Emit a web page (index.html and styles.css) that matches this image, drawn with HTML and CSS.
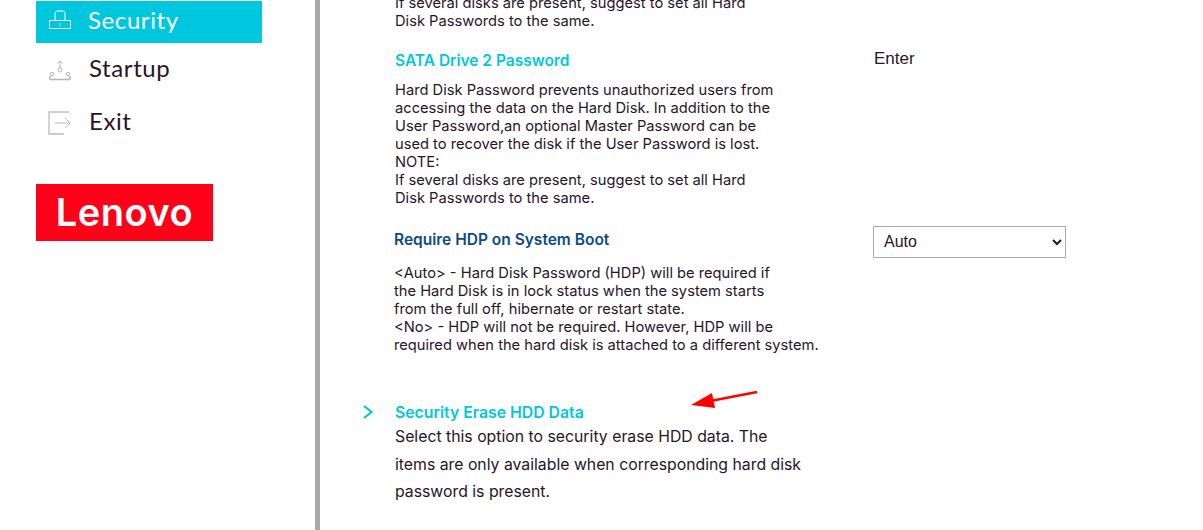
FILE: index.html
```html
<!DOCTYPE html>
<html lang="en">
<head>
  <meta charset="UTF-8" />
  <title>BIOS Setup - Security</title>
  <link rel="stylesheet" href="styles.css">
</head>
<body>
  <div class="page">
    <!-- Sidebar -->
    <aside class="sidebar">
      <ul class="nav">
        <li class="nav-item active">
          <svg class="nav-icon lock" width="24" height="22" viewBox="0 0 24 22" fill="none" stroke="#fff" stroke-width="1">
            <path d="M1.500 10.500h21v8h-21z"/>
            <path d="M7 10.500V3.500a2.500 2.500 0 0 1 2.500-2.500h5a2.500 2.500 0 0 1 2.500 2.500v7"/>
            <path d="M12 13v3.500" stroke-opacity=".5"/>
          </svg>
          <span>Security</span>
        </li>
        <li class="nav-item startup">
          <svg class="nav-icon" width="24" height="22" viewBox="0 0 24 22" fill="none" stroke="#b5b5b5" stroke-width="1">
            <path d="M12 9V2M9.500 4.500 12 2l2.500 2.500"/>
            <circle cx="12" cy="11" r="2"/>
            <circle cx="4" cy="15" r="1.700"/>
            <circle cx="20" cy="15" r="1.700"/>
            <path d="M2 20.500h20M2 17v3.500M22 17v3.500" stroke-width="1.500"/>
          </svg>
          <span>Startup</span>
        </li>
        <li class="nav-item exit">
          <svg class="nav-icon" width="24" height="24" viewBox="0 0 24 24" fill="none" stroke="#bdbdbd" stroke-width="1.300">
            <path d="M21 1H1v22h15"/>
            <path d="M7 12h15M17 7l5 5-5 5" stroke-width="1"/>
          </svg>
          <span>Exit</span>
        </li>
      </ul>
      <div class="logo">Lenovo</div>
    </aside>

    <!-- Contenido -->
    <main class="content">
      <p class="desc first">If several disks are present, suggest to set all Hard<br>Disk Passwords to the same.</p>

      <section class="setting sata">
        <div class="setting-text">
          <h3 class="title cyan">SATA Drive 2 Password</h3>
          <p class="desc">Hard Disk Password prevents unauthorized users from<br>accessing the data on the Hard Disk. In addition to the<br>User Password,an optional Master Password can be<br>used to recover the disk if the User Password is lost.<br>NOTE:<br>If several disks are present, suggest to set all Hard<br>Disk Passwords to the same.</p>
        </div>
        <div class="enter">Enter</div>
      </section>

      <section class="setting hdp">
        <div class="setting-text">
          <h3 class="title navy">Require HDP on System Boot</h3>
          <p class="desc">&lt;Auto&gt; - Hard Disk Password (HDP) will be required if<br>the Hard Disk is in lock status when the system starts<br>from the full off, hibernate or restart state.<br>&lt;No&gt; - HDP will not be required. However, HDP will be<br>required when the hard disk is attached to a different system.</p>
        </div>
        <select class="dropdown">
          <option>Auto</option>
          <option>No</option>
        </select>
      </section>

      <section class="setting erase">
        <svg class="chevron" width="12" height="16" viewBox="0 0 12 16" fill="none" stroke="#00c7de" stroke-width="2.200">
          <path d="M2 2l7.500 6L2 14"/>
        </svg>
        <div class="setting-text">
          <h3 class="title cyan">Security Erase HDD Data</h3>
          <p class="desc wide">Select this option to security erase HDD data. The<br>items are only available when corresponding hard disk<br>password is present.</p>
        </div>
      </section>

      <!-- Flecha roja encima del contenido -->
      <svg class="arrow" width="70" height="20" viewBox="0 0 70 20">
        <path d="M67 2 23 10.500" stroke="#f00" stroke-width="2.600" fill="none"/>
        <path d="M1 15 22 3l3 15z" fill="#f00"/>
      </svg>
    </main>
  </div>
</body>
</html>
```

FILE: styles.css
```css
* {
  box-sizing: border-box;
}
html, body {
  height: 100%;
}
body {
  margin: 0;
  overflow: hidden;
  background-color: white;
  color: #2a1428;
  font-family: "Inter", "Liberation Sans", sans-serif;
}
.page {
  display: flex;
  height: 530px;
}

/* Sidebar */
.sidebar {
  width: 320px;
  flex: none;
  padding: 1px 0 0 36px;
  border-right: 5px solid #aaa;
}
.nav {
  list-style: none;
  margin: 0;
  padding: 0;
  width: 226px;
}
.nav-item {
  display: flex;
  align-items: center;
  gap: 17px;
  height: 42px;
  padding-left: 12px;
  font-family: "Lato", sans-serif;
  font-size: 24px;
  letter-spacing: 0.6px;
}
.nav-item span {
  margin-top: -4px;
}
.nav-item.active {
  background-color: #00c7de;
  color: white;
}
.nav-item.active span {
  margin-top: -6px;
  margin-left: -1px;
}
.lock {
  margin-top: -3px;
}
.nav-item.startup {
  height: 53px;
}
.nav-item.exit {
  height: 53px;
}
.logo {
  width: 177px;
  height: 57px;
  margin-top: 35px;
  background-color: #ff0019;
  color: white;
  font-family: "Inter", sans-serif;
  font-size: 38px;
  font-weight: 600;
  line-height: 57px;
  text-align: center;
  letter-spacing: 0.5px;
}

/* Contenido */
.content {
  position: relative;
  flex: 1;
  padding-left: 75px;
}
.desc {
  margin: 0;
  font-size: 14.700px;
  line-height: 18px;
}
.desc.first {
  margin-top: -6px;
}
.setting {
  display: flex;
  align-items: flex-start;
}
.setting-text {
  width: 479px;
  flex: none;
}
.title {
  margin: 0 0 10px;
  font-size: 15.500px;
  font-weight: 600;
  line-height: 20px;
}
.cyan {
  color: #00c7de;
}
.navy {
  color: #0b4a88;
}
.sata {
  margin-top: 21px;
}
.enter {
  margin-top: -2px;
  font-family: "Liberation Sans", sans-serif;
  font-size: 17px;
  line-height: 20px;
}
.hdp {
  margin-top: 23px;
  margin-left: -1px;
}
.hdp .title {
  margin-bottom: 14px;
}
.dropdown {
  width: 193px;
  height: 32px;
  margin-top: -4px;
  padding: 0 6px 2px;
  background-color: white;
  border: 1px solid #aaa;
  border-radius: 0;
  color: #2a1428;
  font-family: "Liberation Sans", sans-serif;
  font-size: 16px;
}
.erase {
  margin-top: 49px;
  margin-left: -33px;
  gap: 21px;
}
.erase .title {
  margin-bottom: 0;
  font-size: 15.800px;
}
.desc.wide {
  font-size: 15.800px;
  line-height: 27.500px;
}
.chevron {
  margin-top: 1px;
}
.arrow {
  position: absolute;
  left: 370px;
  top: 390px;
}
```
